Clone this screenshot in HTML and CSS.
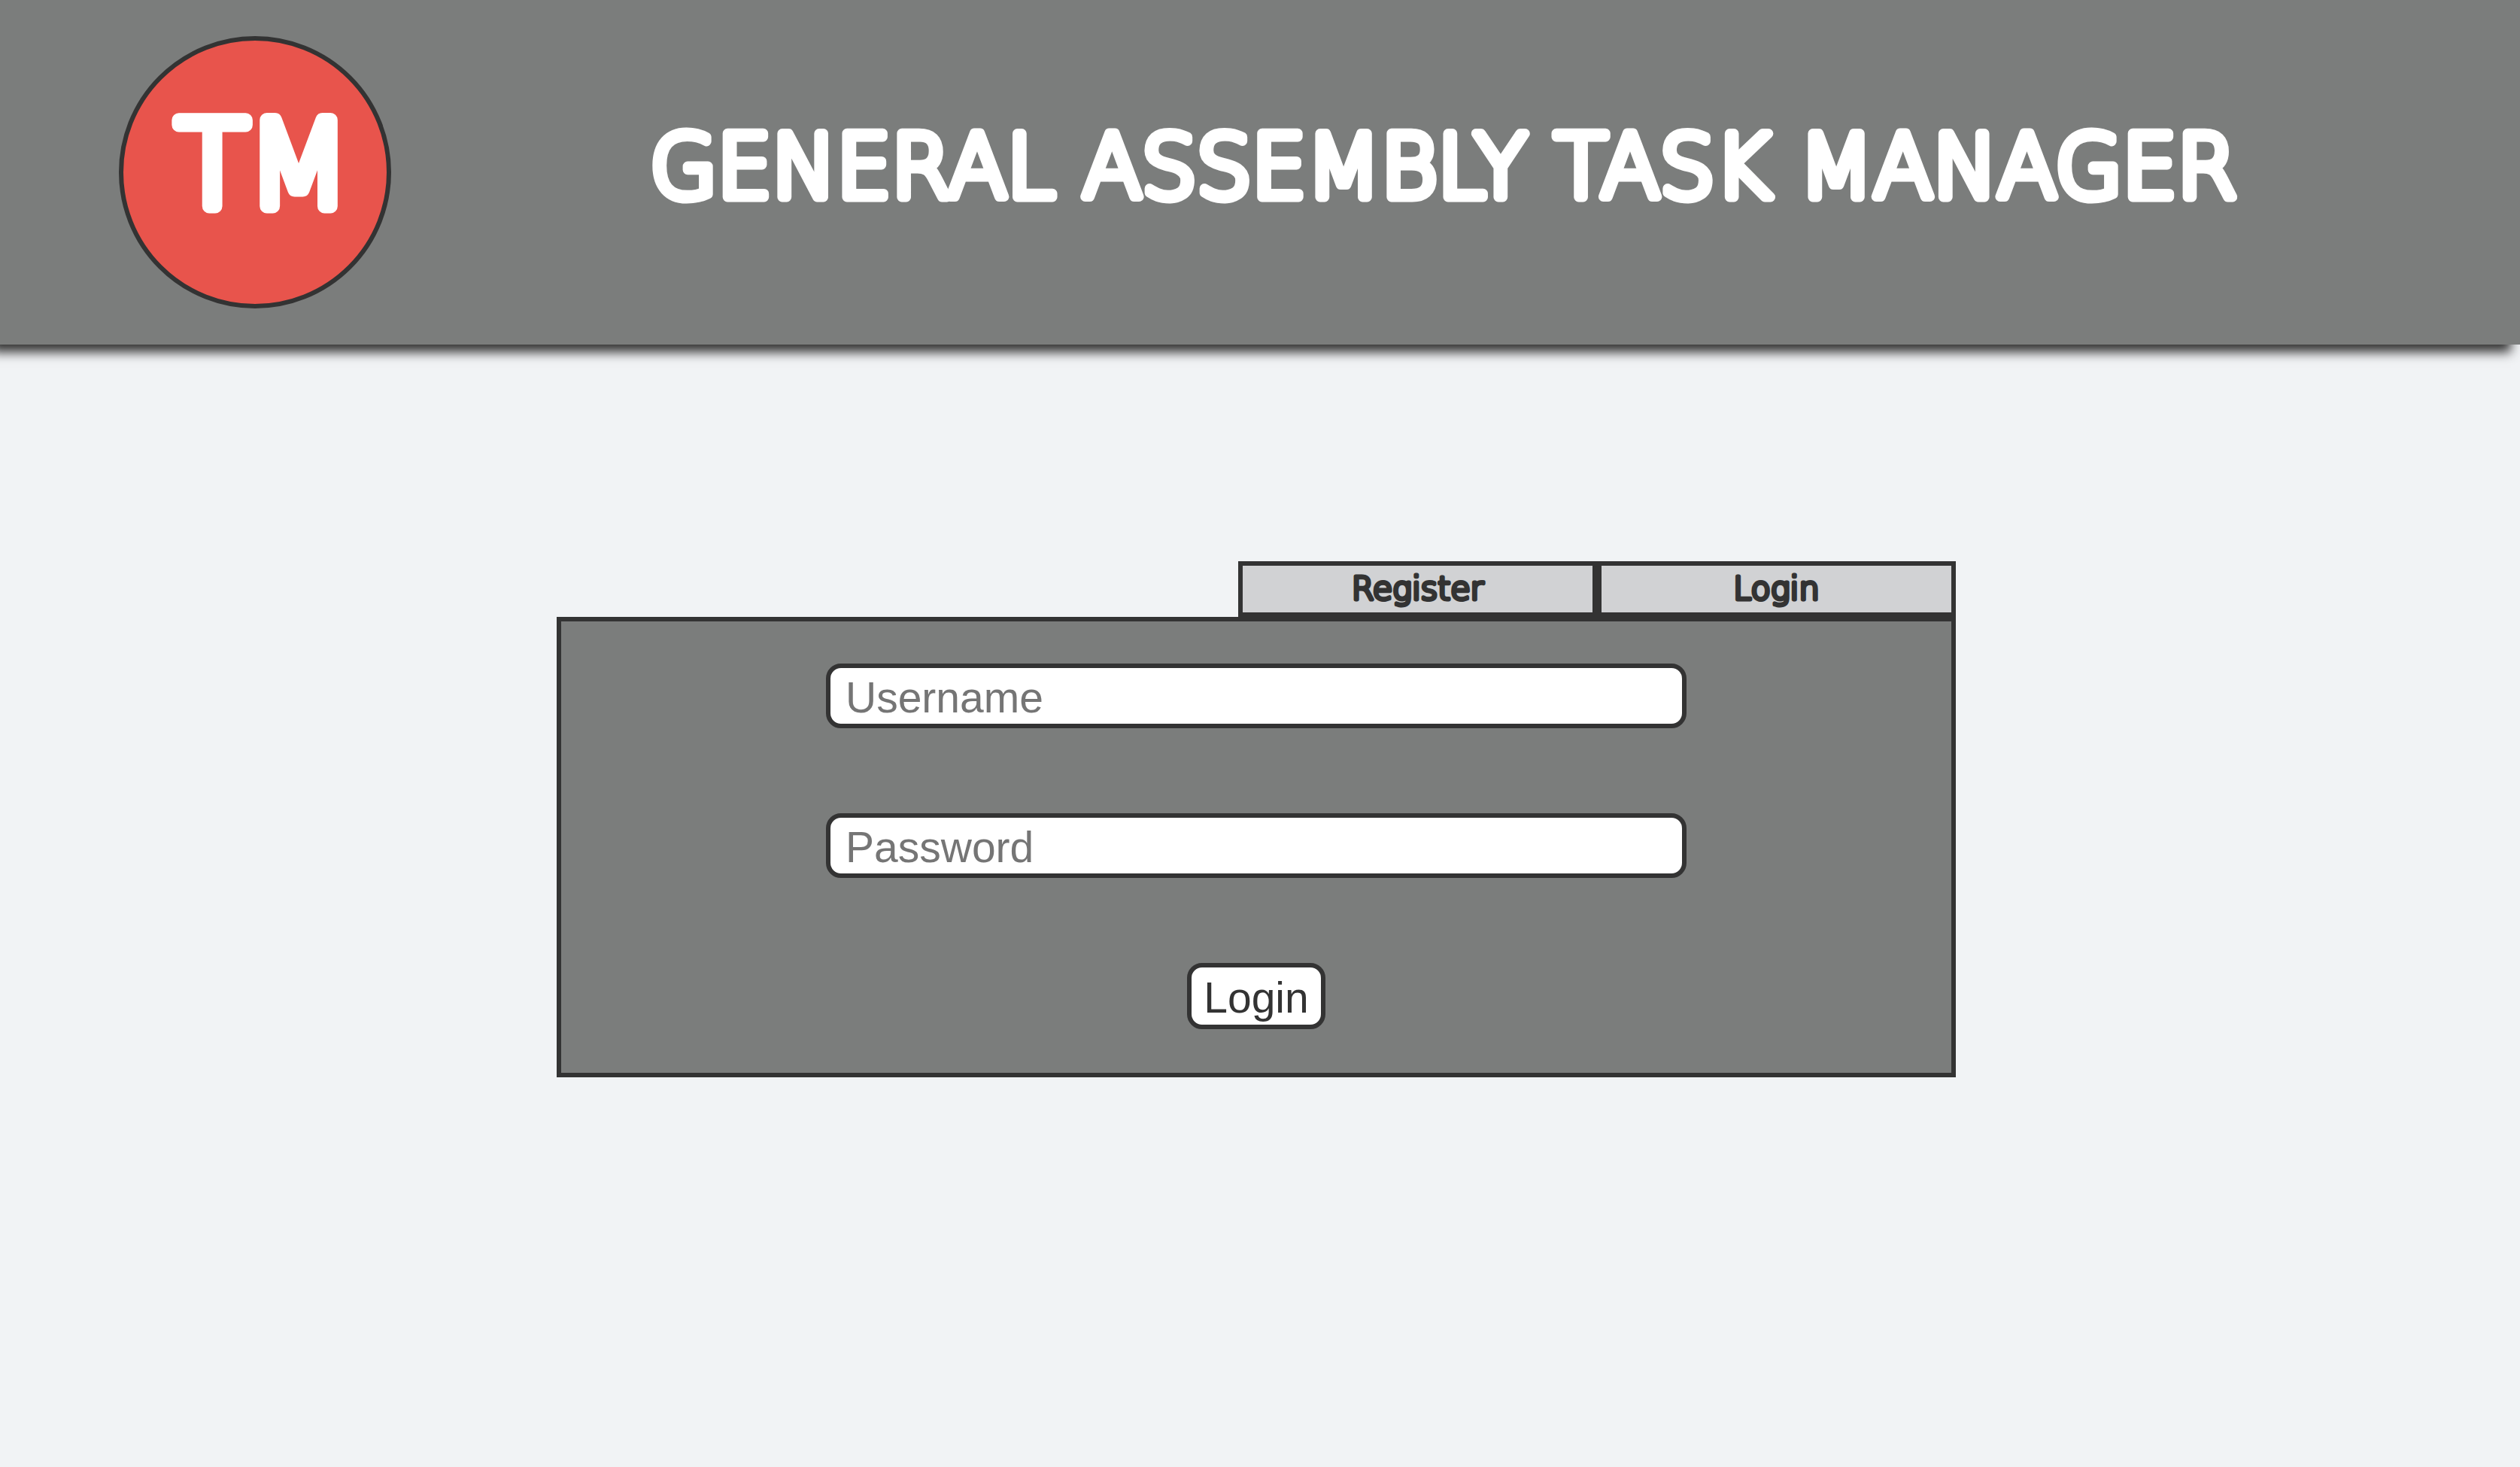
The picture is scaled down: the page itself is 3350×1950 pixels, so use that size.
FILE: index.html
```html
<!DOCTYPE html>
<html lang="en">
<head>
<meta charset="utf-8">
<meta name="viewport" content="width=device-width, initial-scale=1">
<title>General Assembly Task Manager</title>
<link rel="stylesheet" href="styles.css">
</head>
<body>
<header class="site-header">
  <div class="logo">
    <svg class="logo-mark"><text class="rounded" x="53%" y="220">TM</text></svg>
  </div>
  <h1 class="site-title">
    <svg class="title-line"><text class="rounded" x="50%" y="105">GENERAL ASSEMBLY TASK MANAGER</text></svg>
  </h1>
</header>
<main class="auth">
  <div class="tabs">
    <button class="tab" type="button"><svg class="tab-label"><text class="rounded" x="50%" y="45">Register</text></svg></button>
    <button class="tab" type="button"><svg class="tab-label"><text class="rounded" x="50%" y="45">Login</text></svg></button>
  </div>
  <form class="panel">
    <input class="field" type="text" placeholder="Username" aria-label="Username">
    <input class="field" type="password" placeholder="Password" aria-label="Password">
    <button class="submit" type="submit">Login</button>
  </form>
</main>
</body>
</html>
```
FILE: styles.css
```css
* {
  box-sizing: border-box;
}

body {
  margin: 0;
  background: #f1f3f5;
  color: #333;
  font-family: "Liberation Sans", Arial, sans-serif;
}

.site-header {
  display: flex;
  align-items: center;
  padding: 48px 32px 48px 158px;
  background: #7b7d7c;
  box-shadow: -12px 10px 14px #333;
  color: #fff;
}

/* Thin letters with a thick round outline give soft, rounded strokes */
.rounded {
  fill: currentColor;
  stroke: currentColor;
  stroke-linejoin: round;
  text-anchor: middle;
  font-family: "DejaVu Sans", sans-serif;
  font-weight: 200;
}

.logo {
  flex: none;
  width: 362px;
  height: 362px;
  border: 6px solid #333;
  border-radius: 50%;
  background: #e8544c;
  font-size: 156px;
  stroke-width: 19px;
}

.logo-mark {
  display: block;
  width: 100%;
  height: 100%;
}

.site-title {
  flex: 1;
  margin: 0;
  font-size: 115px;
  stroke-width: 13px;
}

.title-line {
  display: block;
  width: 100%;
  height: 144px;
  overflow: visible;
}

.auth {
  width: 90%;
  max-width: 1870px;
  margin: 288px auto 0;
  padding-right: 10px;
}

.tabs {
  display: flex;
  justify-content: flex-end;
}

.tab {
  width: 477px;
  height: 74px;
  padding: 0;
  border: 6px solid #333;
  background: #d1d2d4;
  color: #333;
  font-size: 43px;
  stroke-width: 5px;
}

.tab-label {
  display: block;
  width: 100%;
  height: 62px;
}

.panel {
  display: flex;
  flex-direction: column;
  align-items: center;
  gap: 113px;
  padding: 56px 24px 58px;
  border: 6px solid #333;
  background: #7b7d7c;
}

.field,
.submit {
  border: 6px solid #333;
  border-radius: 20px;
  background: #fff;
  color: #333;
  font-family: inherit;
  font-size: 57px;
  line-height: 70px;
}

.field {
  width: 100%;
  max-width: 1144px;
  height: 86px;
  padding: 4px 20px 0;
}

.field::placeholder {
  color: #757575;
}

.submit {
  width: 184px;
  height: 88px;
  padding: 4px 0 0;
}
```
